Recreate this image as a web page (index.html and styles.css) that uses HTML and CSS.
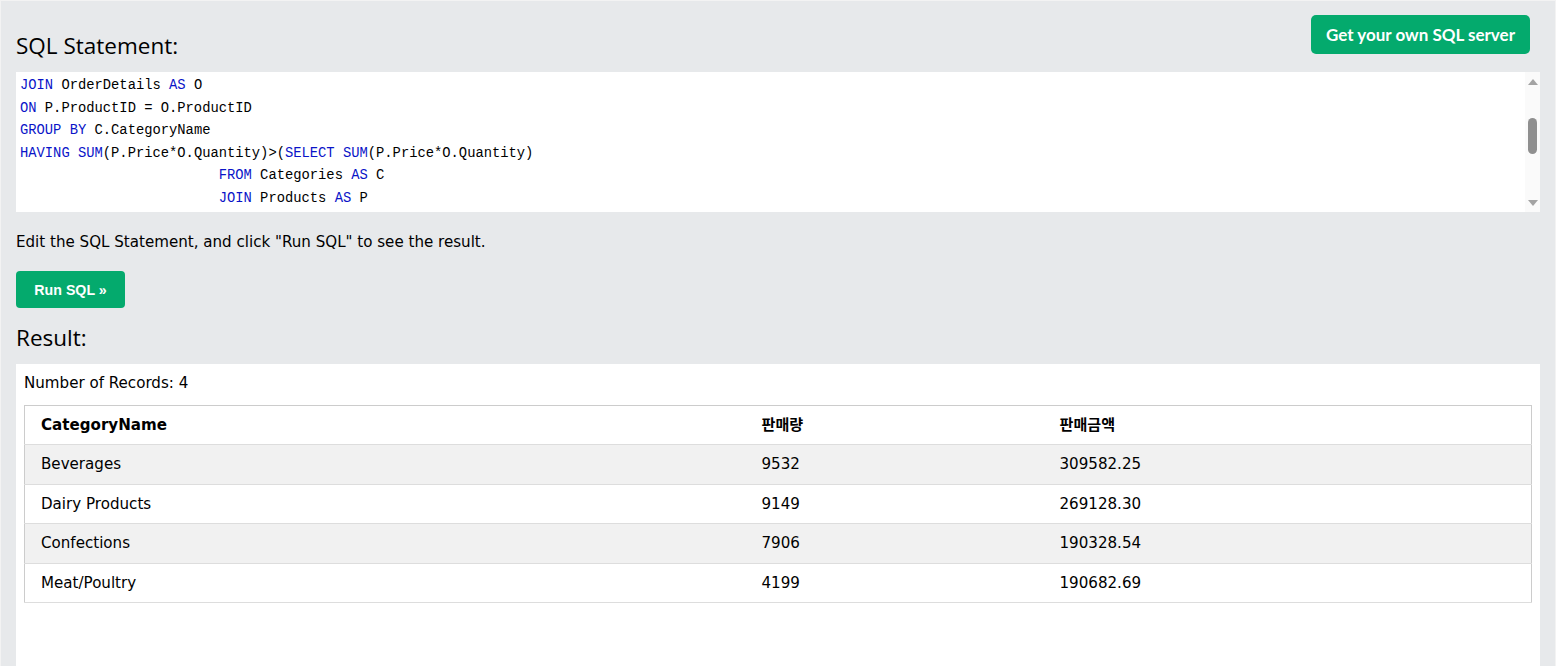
FILE: index.html
```html
<!DOCTYPE html>
<html lang="en">
<head>
<meta charset="utf-8">
<title>SQL Tryit</title>
<link rel="stylesheet" href="styles.css">
</head>
<body>
<div class="page">
  <div class="top">
    <h2 class="heading heading-sql">SQL Statement:</h2>
    <a class="server-btn" href="#">Get your own SQL server</a>
  </div>
  <div class="editor">
    <div class="code">
      <div class="line"><span class="kw">JOIN</span> OrderDetails <span class="kw">AS</span> O</div>
      <div class="line"><span class="kw">ON</span> P.ProductID = O.ProductID</div>
      <div class="line"><span class="kw">GROUP BY</span> C.CategoryName</div>
      <div class="line"><span class="kw">HAVING</span> <span class="kw">SUM</span>(P.Price*O.Quantity)&gt;(<span class="kw">SELECT</span> <span class="kw">SUM</span>(P.Price*O.Quantity)</div>
      <div class="line">                        <span class="kw">FROM</span> Categories <span class="kw">AS</span> C</div>
      <div class="line">                        <span class="kw">JOIN</span> Products <span class="kw">AS</span> P</div>
    </div>
    <div class="scrollbar">
      <svg class="arrow" width="10" height="6" viewBox="0 0 10 6"><path d="M0 6 L5 0 L10 6 Z" fill="#a3a3a3"/></svg>
      <div class="track"><div class="thumb"></div></div>
      <svg class="arrow" width="10" height="6" viewBox="0 0 10 6"><path d="M0 0 L5 6 L10 0 Z" fill="#a3a3a3"/></svg>
    </div>
  </div>
  <p class="hint">Edit the SQL Statement, and click "Run SQL" to see the result.</p>
  <button class="run-btn" type="button">Run SQL »</button>
  <h2 class="heading heading-result">Result:</h2>
  <div class="result">
    <div class="count">Number of Records: 4</div>
    <table class="grid">
      <colgroup>
        <col class="c1"><col class="c2"><col class="c3">
      </colgroup>
      <tr><th>CategoryName</th><th>판매량</th><th>판매금액</th></tr>
      <tr><td>Beverages</td><td>9532</td><td>309582.25</td></tr>
      <tr><td>Dairy Products</td><td>9149</td><td>269128.30</td></tr>
      <tr><td>Confections</td><td>7906</td><td>190328.54</td></tr>
      <tr><td>Meat/Poultry</td><td>4199</td><td>190682.69</td></tr>
    </table>
  </div>
</div>
</body>
</html>
```

FILE: styles.css
```css
html, body {
  margin: 0;
  padding: 0;
  height: 100%;
}
body {
  background: #e7e9eb;
  font-family: "DejaVu Sans", Verdana, sans-serif;
  font-size: 15.1px;
  color: #000;
  overflow: hidden;
}
.page {
  border-top: 1px solid #f3f3f3;
  border-left: 1px solid #f3f3f3;
  border-right: 1px solid #f3f3f3;
  min-height: 100%;
  box-sizing: border-box;
  padding: 0 15px;
  display: flex;
  flex-direction: column;
}
.top {
  display: flex;
  justify-content: space-between;
  align-items: flex-start;
  padding-top: 14px;
  height: 71px;
  box-sizing: border-box;
  padding-right: 10px;
}
.heading {
  font-family: "Open Sans", "Noto Sans", sans-serif;
  font-weight: 400;
  font-size: 22.5px;
  line-height: 30px;
  margin: 0;
  color: #000;
}
.heading-sql {
  margin-top: 16px;
}
.server-btn {
  display: block;
  background: #04aa6d;
  color: #fff;
  text-decoration: none;
  font-family: "Lato", "Open Sans", sans-serif;
  font-weight: 700;
  font-size: 17px;
  line-height: 39px;
  height: 39px;
  padding: 0 15px;
  border-radius: 5px;
}
.editor {
  background: #fff;
  height: 140px;
  display: flex;
}
.code {
  flex: 1;
  padding: 3px 4px 0;
  overflow: hidden;
  font-family: "Liberation Mono", "DejaVu Sans Mono", monospace;
  font-size: 13.8px;
  line-height: 22.6px;
  color: #000;
}
.line {
  white-space: pre;
}
.kw {
  color: #0a14c8;
}
.scrollbar {
  width: 15px;
  background: #fafafa;
  display: flex;
  flex-direction: column;
  align-items: center;
  padding: 7px 0 6px;
  box-sizing: border-box;
}
.arrow {
  display: block;
}
.track {
  flex: 1;
  width: 100%;
  display: flex;
  justify-content: center;
  padding-top: 33px;
}
.thumb {
  width: 9px;
  height: 36px;
  background: #8f8f8f;
  border-radius: 5px;
}
.hint {
  margin: 0;
  padding-top: 19px;
  line-height: 22px;
  height: 40px;
  box-sizing: border-box;
}
.run-btn {
  align-self: flex-start;
  margin-top: 19px;
  background: #04aa6d;
  color: #fff;
  border: none;
  border-radius: 4px;
  font-family: "Liberation Sans", Arial, sans-serif;
  font-weight: 700;
  font-size: 14.2px;
  height: 37px;
  width: 109px;
  padding: 0;
  cursor: pointer;
}
.heading-result {
  margin-top: 15px;
  margin-bottom: 0;
  height: 41px;
}
.result {
  flex: 1;
  background: #fff;
  padding: 8px 8px 0;
}
.count {
  line-height: 23px;
  height: 33px;
}
.grid {
  width: 100%;
  border-collapse: collapse;
  border: 1px solid #cccccc;
  table-layout: fixed;
}
.c1 { width: 721px; }
.c2 { width: 298px; }
.grid th, .grid td {
  text-align: left;
  padding: 8px 16px;
  line-height: 22.5px;
  border-bottom: 1px solid #dddddd;
  font-family: "DejaVu Sans", Verdana, "Noto Sans CJK KR", sans-serif;
}
.grid th {
  font-weight: 700;
  line-height: 23px;
  padding-top: 8px;
  padding-bottom: 7px;
}
.grid tr:nth-child(even) td {
  background: #f1f1f1;
}
```
